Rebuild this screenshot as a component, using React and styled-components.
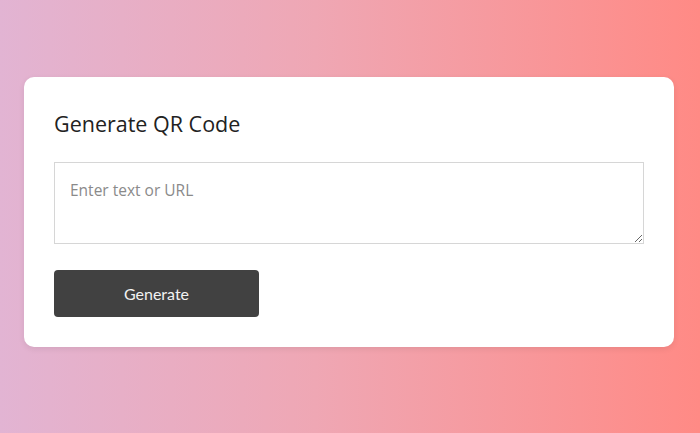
import React, { useState } from 'react';
import styled, { createGlobalStyle } from 'styled-components';

const GlobalStyle = createGlobalStyle`
  html, body {
    margin: 0;
    padding: 0;
    height: 100%;
  }
  body {
    font-family: "Open Sans", "Noto Sans", "Liberation Sans", sans-serif;
    background: linear-gradient(to right, #e2b4d3 0%, #efa7b4 45%, #ff8a85 100%);
  }
  #root {
    height: 100%;
  }
`;

const Page = styled.div`
  min-height: 100%;
  display: flex;
  align-items: center;
  justify-content: center;
  padding: 0 26px 10px 24px;
  box-sizing: border-box;
`;

const Card = styled.div`
  width: 100%;
  max-width: 650px;
  background: #ffffff;
  border-radius: 10px;
  padding: 30px;
  box-sizing: border-box;
  box-shadow: 0 2px 6px rgba(0, 0, 0, 0.08);
`;

const Title = styled.h2`
  margin: 0 0 21px;
  font-size: 21.5px;
  font-weight: 400;
  line-height: 34px;
  color: #222222;
`;

const TextInput = styled.textarea`
  display: block;
  width: 100%;
  height: 82px;
  box-sizing: border-box;
  padding: 16px 15px 15px;
  border: 1px solid #d6d6d6;
  border-radius: 0;
  font-family: "Open Sans", "Noto Sans", sans-serif;
  font-size: 15.5px;
  color: #333333;
  resize: vertical;
  outline: none;

  &::placeholder {
    color: #8a8a8a;
  }
`;

const GenerateButton = styled.button`
  display: block;
  margin-top: 26px;
  width: 205px;
  height: 47px;
  border: none;
  border-radius: 4px;
  background: #414141;
  color: #f2f2f2;
  font-family: Lato, "Open Sans", sans-serif;
  font-size: 16px;
  cursor: pointer;
`;

const App = () => {
  const [text, setText] = useState('');

  return (
    <>
      <GlobalStyle />
      <Page>
        <Card>
          <Title>Generate QR Code</Title>
          <TextInput
            placeholder="Enter text or URL"
            value={text}
            onChange={(e) => setText(e.target.value)}
          />
          <GenerateButton>Generate</GenerateButton>
        </Card>
      </Page>
    </>
  );
};

export default App;
